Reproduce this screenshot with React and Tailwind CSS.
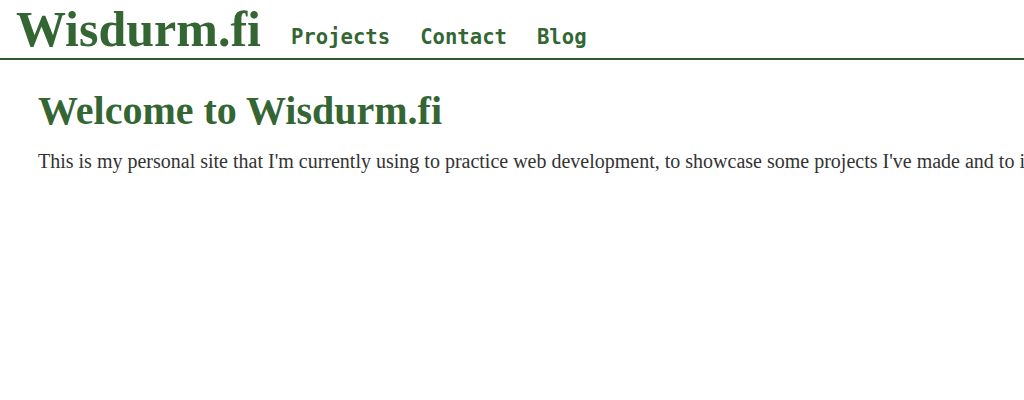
import React from 'react';

const links = ['Projects', 'Contact', 'Blog'];

const App = () => {
  return (
    <div className="min-h-[400px] bg-white overflow-hidden">
      <header className="flex items-end border-b-2 border-[#2f5a2f] px-4 h-[60px]">
        <h1 className="text-[50px] leading-[58px] font-bold text-[#336633] font-['Liberation_Serif',serif]">
          Wisdurm.fi
        </h1>
        <nav className="flex gap-[30px] ml-[30px] mb-[9px]">
          {links.map(link => (
            <a
              key={link}
              href="#"
              className="text-[20.6px] leading-6 font-bold text-[#336633] font-['DejaVu_Sans_Mono',monospace]"
            >
              {link}
            </a>
          ))}
        </nav>
      </header>
      <main className="px-[38px] pt-[28px]">
        <h2 className="text-[40px] leading-[46px] font-bold text-[#336633] font-['Liberation_Serif',serif]">
          Welcome to Wisdurm.fi
        </h2>
        <p className="mt-[12px] text-[20px] text-[#333333] whitespace-nowrap font-['Liberation_Serif',serif]">
          This is my personal site that I'm currently using to practice web development, to showcase some projects I've made and to introduce myself.
        </p>
      </main>
    </div>
  );
};

export default App;
